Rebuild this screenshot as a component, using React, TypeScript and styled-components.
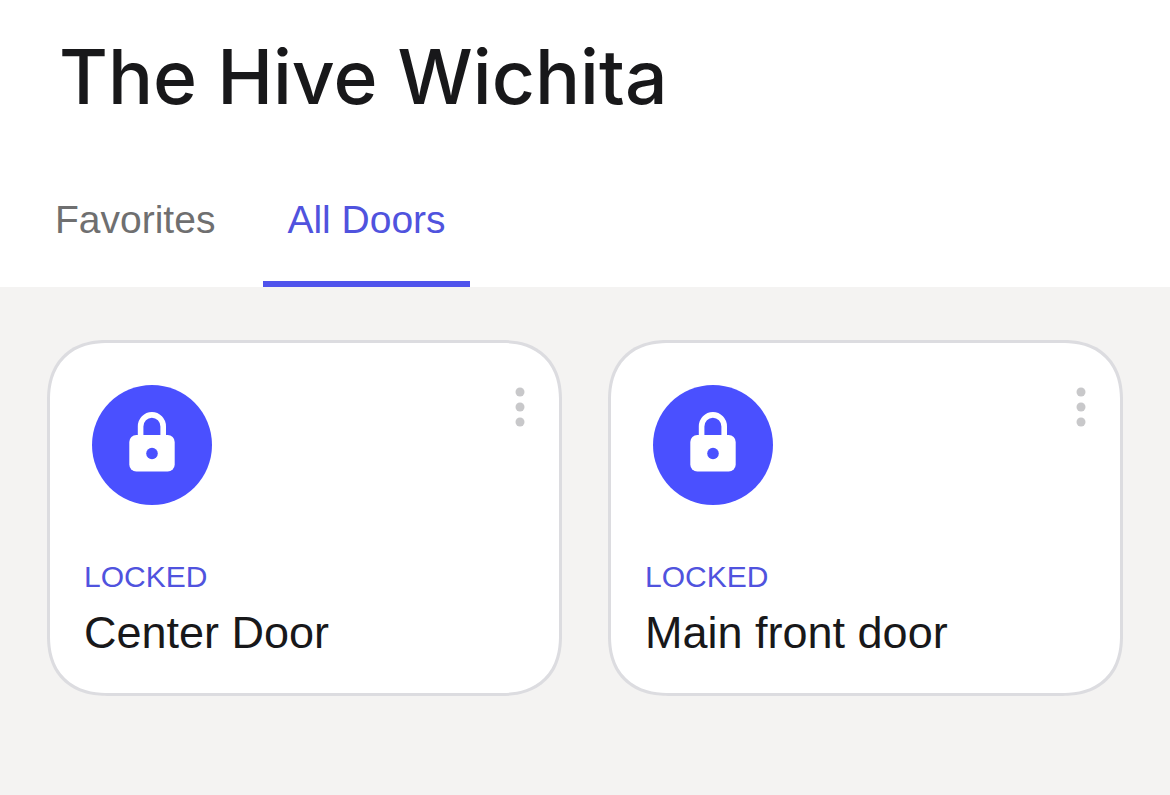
import React from "react";
import styled, { createGlobalStyle } from "styled-components";

const GlobalStyle = createGlobalStyle`
  * { box-sizing: border-box; }
  body {
    margin: 0;
    background: #f4f3f2;
    color: #18181a;
    font-family: "Liberation Sans", Helvetica, Arial, sans-serif;
  }
`;

const Header = styled.header`
  background: #ffffff;
`;

const Title = styled.h1`
  margin: 0;
  padding: 29px 59px 0;
  font-family: Inter, sans-serif;
  font-size: 75px;
  line-height: 96px;
  font-weight: 500;
`;

const Tabs = styled.nav`
  display: flex;
  padding: 51px 31px 0;
  gap: 24px;
`;

const BaseButton = styled.button`
  padding: 0;
  border: 0;
  background: none;
  font-family: inherit;
  cursor: pointer;
  svg { display: block; }
`;

const Tab = styled(BaseButton)<{ $active?: boolean }>`
  height: 111px;
  padding: 0 24px 18px;
  border-bottom: 6px solid ${(p) => (p.$active ? "#4f53ec" : "transparent")};
  color: ${(p) => (p.$active ? "#5053de" : "#6f6f70")};
  font-size: 39px;
  line-height: 44px;
`;

const DoorGrid = styled.main`
  display: grid;
  grid-template-columns: 1fr 1fr;
  gap: 46px;
  padding: 53px 47px;
`;

const Card = styled.article`
  padding: 42px 34px 32px;
  border: 3px solid #dcdce0;
  border-radius: 60px;
  corner-shape: superellipse(1.2);
  background: #ffffff;
`;

const CardTop = styled.div`
  display: flex;
  justify-content: space-between;
  align-items: flex-start;
  padding-left: 8px;
`;

const LockButton = styled(BaseButton)`
  width: 120px;
  height: 120px;
  border-radius: 50%;
  background: #4a50ff;
`;

const Status = styled.p`
  margin: 54px 0 0;
  color: #5053de;
  font-size: 30px;
  line-height: 36px;
`;

const DoorName = styled.h2`
  margin: 10px 0 0;
  font-size: 45px;
  line-height: 56px;
  font-weight: 400;
`;

function LockIcon() {
  return (
    <svg width="120" height="120" viewBox="0 0 120 120" aria-hidden="true">
      <path d="M48.600 53V41.500a11.300 11.600 0 0 1 22.600 0V53" fill="none" stroke="#fff" strokeWidth="5.600" />
      <rect x="37.300" y="50" width="45.400" height="36.500" rx="7" fill="#fff" />
      <circle cx="60" cy="68.500" r="5.800" fill="#4a50ff" />
    </svg>
  );
}

function DotsIcon() {
  return (
    <svg width="10" height="44" viewBox="0 0 10 44" fill="#c8c8ca" aria-hidden="true">
      <circle cx="5" cy="7" r="4.500" />
      <circle cx="5" cy="22" r="4.500" />
      <circle cx="5" cy="37" r="4.500" />
    </svg>
  );
}

const doors = ["Center Door", "Main front door"];

export default function App() {
  return (
    <>
      <GlobalStyle />
      <Header>
        <Title>The Hive Wichita</Title>
        <Tabs aria-label="Door lists">
          <Tab type="button">Favorites</Tab>
          <Tab type="button" $active aria-current="page">All Doors</Tab>
        </Tabs>
      </Header>
      <DoorGrid>
        {doors.map((name) => (
          <Card key={name}>
            <CardTop>
              <LockButton type="button" aria-label={`Unlock ${name}`}><LockIcon /></LockButton>
              <BaseButton type="button" aria-label={`Options for ${name}`}><DotsIcon /></BaseButton>
            </CardTop>
            <Status>LOCKED</Status>
            <DoorName>{name}</DoorName>
          </Card>
        ))}
      </DoorGrid>
    </>
  );
}
